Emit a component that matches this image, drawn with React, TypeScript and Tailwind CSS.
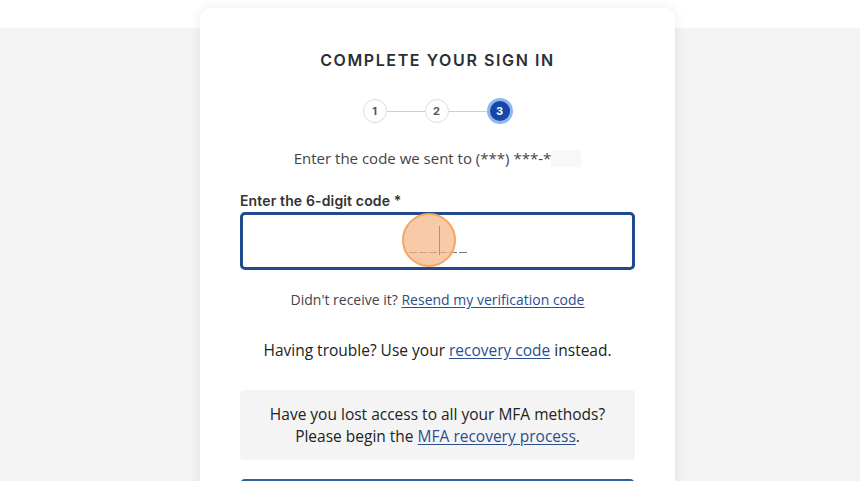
import React from 'react';

function Step({ n, active }: { n: number; active?: boolean }) {
  if (active) {
    return (
      <div className="flex h-[26px] w-[26px] items-center justify-center rounded-full bg-[#8fb6f2]">
        <div className="flex h-[20px] w-[20px] items-center justify-center rounded-full bg-[#1747a6] text-[11px] font-bold text-white">
          {n}
        </div>
      </div>
    );
  }
  return (
    <div className="flex h-[24px] w-[24px] items-center justify-center rounded-full border border-[#dcdcdc] bg-white text-[11px] font-bold text-[#555]">
      {n}
    </div>
  );
}

export default function App() {
  return (
    <div
      className="h-[481px] w-[860px] overflow-hidden bg-[linear-gradient(to_bottom,#ffffff_28px,#f3f3f3_28px)]"
      style={{ fontFamily: '"Open Sans", "Liberation Sans", sans-serif' }}
    >
      <div className="ml-[200px] mt-[8px] h-[600px] w-[475px] rounded-[10px] bg-white px-[40px] pt-[42px] shadow-[0_0_12px_rgba(0,0,0,0.08)]">
        {/* Title */}
        <h1
          className="text-center text-[16px] font-semibold leading-[20px] tracking-[0.1em] text-[#2a2f35]"
          style={{ fontFamily: 'Inter, "Liberation Sans", sans-serif' }}
        >
          COMPLETE YOUR SIGN IN
        </h1>

        {/* Stepper */}
        <div
          className="mt-[28px] flex items-center justify-center"
          style={{ fontFamily: 'Inter, "Liberation Sans", sans-serif' }}
        >
          <Step n={1} />
          <div className="h-px w-[38px] bg-[#cfcfcf]" />
          <Step n={2} />
          <div className="h-px w-[38px] bg-[#cfcfcf]" />
          <Step n={3} active />
        </div>

        {/* Sent to */}
        <div className="mt-[24px] flex items-center justify-center text-[15px] leading-[20px] text-[#444]">
          <span>Enter the code we sent to (***) ***-*</span>
          <span className="h-[17px] w-[30px] bg-[#f8f8f8]" />
        </div>

        {/* Label */}
        <label
          className="mt-[24px] block text-[14px] font-semibold leading-[18px] tracking-[0.01em] text-[#333]"
          style={{ fontFamily: 'Inter, "Liberation Sans", sans-serif' }}
        >
          Enter the 6-digit code *
        </label>

        {/* Input */}
        <div className="relative mt-[2px] flex h-[58px] items-center justify-center rounded-[5px] border-[3px] border-[#1f4b8e]">
          <div className="relative flex h-[30px] items-end gap-[2px] pb-[3px]">
            {[0, 1, 2, 3, 4, 5].map((i) => (
              <span key={i} className="h-[1.5px] w-[8px] bg-[#7a7a7a]" />
            ))}
            <div className="absolute left-[30px] top-[0px] h-[29px] w-px bg-[#333]" />
          </div>
          <div className="absolute left-[159px] top-[-2px] h-[54px] w-[54px] rounded-full border-2 border-[#f5a564] bg-[#f7b483]/70" />
        </div>

        {/* Resend */}
        <p className="mt-[21px] text-center text-[14px] leading-[18px] text-[#444]">
          Didn't receive it?{' '}
          <a className="text-[#2a4f8f] underline underline-offset-2" href="#">
            Resend my verification code
          </a>
        </p>

        {/* Trouble */}
        <p className="mt-[30px] text-center text-[15.5px] leading-[22px] text-[#222]">
          Having trouble? Use your{' '}
          <a className="text-[#2a4f8f] underline underline-offset-2" href="#">
            recovery code
          </a>{' '}
          instead.
        </p>

        {/* MFA box */}
        <div className="mt-[29px] rounded-[4px] bg-[#f4f4f4] py-[13px] text-center text-[15.5px] leading-[22px] text-[#222]">
          Have you lost access to all your MFA methods?
          <br />
          Please begin the{' '}
          <a className="text-[#2a4f8f] underline underline-offset-2" href="#">
            MFA recovery process
          </a>
          .
        </div>

        {/* Button */}
        <button className="mt-[19px] h-[44px] w-full rounded-[5px] bg-[#2d5fa0]" />
      </div>
    </div>
  );
}
